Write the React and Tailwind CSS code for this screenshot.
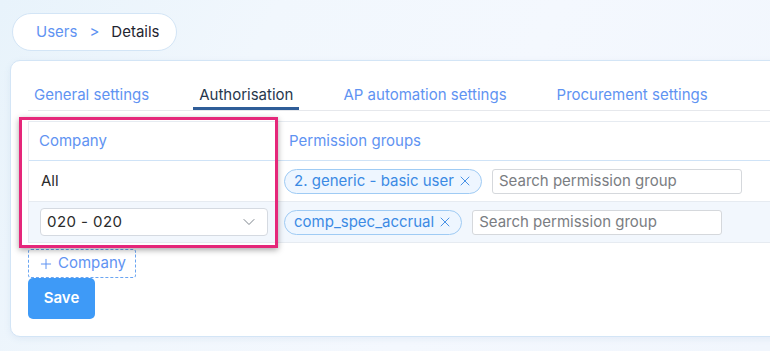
import React from 'react';
import { ChevronDown, X, Plus } from 'lucide-react';

const tabs = [
  { id: 'general', name: 'General settings' },
  { id: 'auth', name: 'Authorisation' },
  { id: 'ap', name: 'AP automation settings' },
  { id: 'proc', name: 'Procurement settings' },
];

const rows = [
  { company: 'All', tag: '2. generic - basic user', select: false },
  { company: '020 - 020', tag: 'comp_spec_accrual', select: true },
];

const Tag = ({ label }) => (
  <span className="flex h-[25px] shrink-0 items-center gap-[3px] rounded-full border border-[#9fcbf4] bg-[#eef6ff] pl-[9px] pr-[8px] text-[15px] text-[#3b8ae4]">
    {label}
    <X size={16} strokeWidth={1.4} />
  </span>
);

const App = () => {
  const active = 'auth';

  return (
    <div
      className="relative h-[351px] w-[770px] overflow-hidden bg-[linear-gradient(115deg,#e8f3fb_0%,#f1f7fd_30%,#f4f8fe_60%,#f1f6fd_100%)] text-[15px]"
      style={{ fontFamily: 'Inter, "Noto Sans", sans-serif' }}
    >
      <div className="ml-[12px] mt-[13px] flex h-[38px] w-[165px] items-center gap-[12px] rounded-full border border-[#d3e5f6] bg-white pl-[23px]">
        <span className="text-[#5f93f2]">Users</span>
        <span className="text-[#5f93f2]">&gt;</span>
        <span className="text-[#1f2530]">Details</span>
      </div>

      <div className="ml-[10px] mt-[9px] h-[277px] w-[820px] rounded-[10px] border border-[#d3e5f6] bg-white px-[17px] pt-[19px] shadow-[0_2px_6px_rgba(120,160,200,0.12)]">
        <div className="flex h-[31px] items-stretch gap-[38px] border-b border-[#e6e8ec]">
          {tabs.map(tab => {
            const isActive = tab.id === active;
            return (
              <div
                key={tab.id}
                className={`flex items-center border-b-[3px] px-[6px] pt-[3px] ${
                  isActive ? 'border-[#2f5d98] text-[#27374d]' : 'border-transparent text-[#5f93f2]'
                }`}
              >
                {tab.name}
              </div>
            );
          })}
        </div>

        <div className="mt-[10px] border-l border-t border-[#e6ebf1]">
          <div className="flex h-[39px] items-center border-b border-[#cfe3f7]">
            <div className="w-[248px] pl-[10px] text-[#5f93f2]">Company</div>
            <div className="pl-[12px] text-[#5f93f2]">Permission groups</div>
          </div>
          {rows.map((row, i) => (
            <div
              key={row.tag}
              className={`flex h-[41px] items-center border-b border-[#e6ebf1] ${i === 1 ? 'bg-[#f2f7fd]' : 'bg-white'}`}
            >
              <div className="w-[248px] pl-[11px] pr-[9px]">
                {row.select ? (
                  <div className="flex h-[28px] items-center justify-between rounded-[4px] border border-[#d5dae1] bg-white pl-[6px] pr-[8px] text-[#2b2b2b] tracking-[0.03em]">
                    {row.company}
                    <ChevronDown size={20} strokeWidth={1.2} className="text-[#7d858d]" />
                  </div>
                ) : (
                  <span className="pl-[1px] text-[#2b2b2b]">{row.company}</span>
                )}
              </div>
              <div className="flex items-center gap-[10px] pl-[7px]">
                <Tag label={row.tag} />
                <div className="flex h-[25px] w-[250px] items-center rounded-[3px] border border-[#d5d8dc] bg-white pl-[6px] text-[#7a7d82]">
                  Search permission group
                </div>
              </div>
            </div>
          ))}
        </div>

        <button
          type="button"
          className="mt-[6px] flex h-[29px] w-[108px] items-center justify-center gap-[4px] rounded-[3px] border border-dashed border-[#6aa5f2] text-[#5f93f2]"
        >
          <Plus size={16} strokeWidth={1.5} />
          Company
        </button>
        <button
          type="button"
          className="flex h-[41px] w-[67px] items-center justify-center rounded-[5px] bg-[#3e9af7] font-semibold text-white"
        >
          Save
        </button>
      </div>

      {/* highlight overlay */}
      <div className="pointer-events-none absolute left-[19px] top-[117px] h-[131px] w-[259px] border-[3px] border-[#e5277a] shadow-[0_2px_6px_rgba(0,0,0,0.35)]" />
    </div>
  );
};

export default App;
